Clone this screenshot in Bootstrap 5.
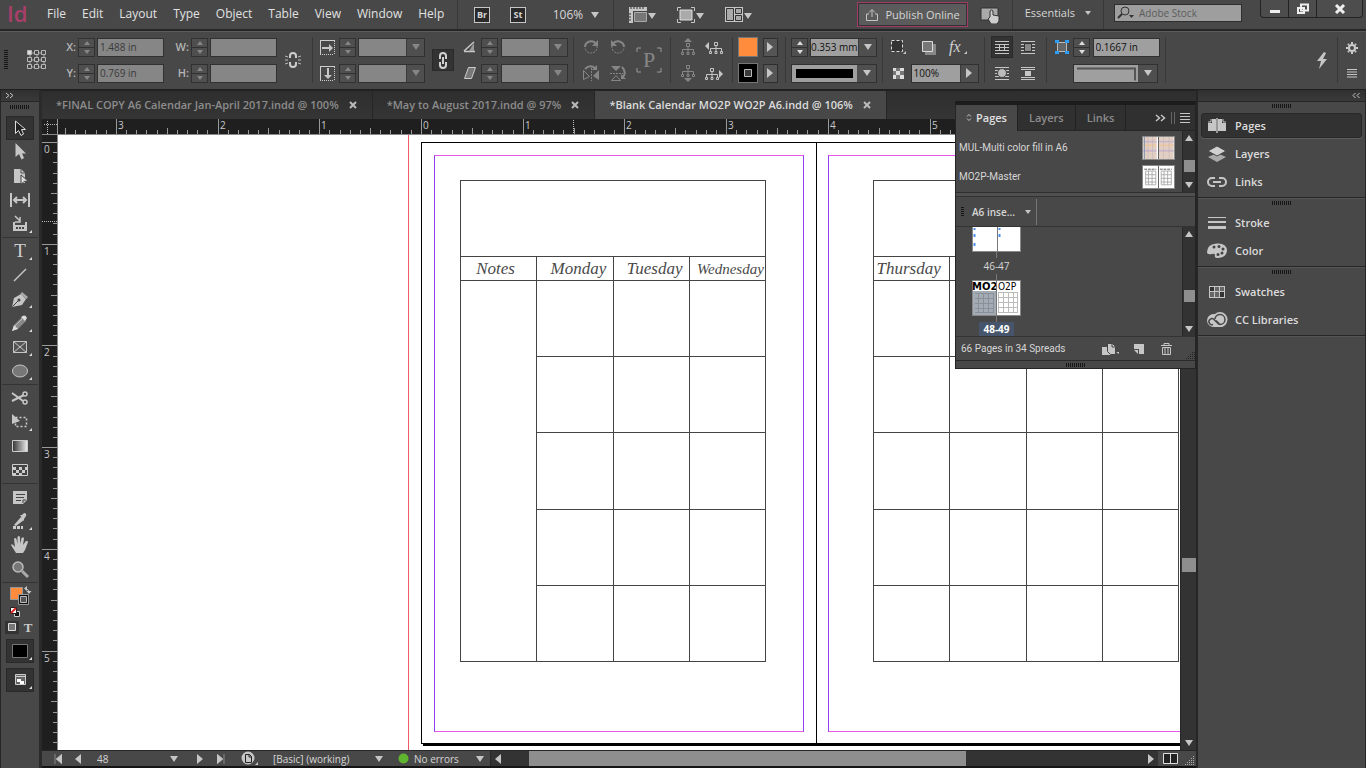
<!DOCTYPE html>
<html lang="en">
<head>
<meta charset="utf-8">
<meta name="viewport" content="width=device-width, initial-scale=1">
<title>Blank Calendar MO2P WO2P A6.indd</title>
<link rel="stylesheet" href="https://cdn.jsdelivr.net/npm/bootstrap@5.3.0/dist/css/bootstrap.min.css">
<style>
:root{--ui:#484848;--edge:#262626;--deep:#303030;--ico:#c6c6c6;--dim:#868686;--hi:#5a5a5a}
body{height:100vh;overflow:hidden;background:var(--ui);color:#d6d6d6;font-family:"Open Sans","Noto Sans",sans-serif;font-size:12px;line-height:16px}
button,input{font:inherit;color:inherit}
button{background:none;border:0;padding:0;display:inline-flex;align-items:center;justify-content:center}
svg{display:block;flex:none}
.ic{fill:var(--ico);stroke:none}
.ln{fill:none;stroke:var(--ico)}
.tri::before{content:"";border:4px solid transparent;display:block}
.t-dn::before{border-top:6px solid var(--ico);border-bottom:0}
.t-up::before{border-bottom:6px solid var(--ico);border-top:0}
.t-rt::before{border-left:6px solid var(--ico);border-right:0;border-top-width:5px;border-bottom-width:5px}
.t-lf::before{border-right:6px solid var(--ico);border-left:0;border-top-width:5px;border-bottom-width:5px}
.vr-line{width:1px;background:#383838;flex:none}

/* application bar */
.appbar{height:29px}
.logo-id{width:39px;padding-left:7px;color:#a83f6b;font-size:22px;line-height:26px;font-weight:600}
.menus{width:418px}
.menus a{color:#e2e2e2;text-decoration:none;padding:0 8px;line-height:28px}
.sq{width:16px;height:16px;border:1px solid #c6c6c6;background:#2a2a2a;font-size:9px;font-weight:700;line-height:13px;color:#d6d6d6}
.sq + .sq{margin-left:20px}
.zoomlvl{margin-left:26px;margin-right:13px;gap:8px;width:48px}
.vw{margin-left:14px;margin-right:4px}
.vw + .vw{margin-left:16px}
.publish{width:111px;height:25px;border:1px solid #a03c66;background:#5b5b5b;box-shadow:inset 0 0 0 1px #333;gap:7px;font-size:11px}
.touch{margin:0 12px 0 12px}
.ess{margin:0 12px 4px 12px;gap:10px;font-size:11px}
.stock{width:128px;height:18px;background:#9e9e9e;border:1px solid #2e2e2e;color:#5a5a5a;margin:0 18px 3px 10px}
.stock input{background:none;border:0;outline:0;width:90px;padding:0;font-size:10px;line-height:16px}
.stock input::placeholder{color:#5c5c5c;opacity:1}
.wins{height:18px;border:1px solid #232323;border-top:0;border-radius:0 0 4px 4px;background:#4d4d4d;margin-right:3px}
.wins button{width:28px;border-right:1px solid #232323}
.wins button:last-child{width:45px;border:0}

/* control bar */
.ctl{height:61px;border-top:2px solid var(--edge);border-bottom:1px solid #221e20;box-shadow:inset 0 1px 0 var(--hi);font-size:11px}
.ctl .vr-line{height:46px}
.refpt{margin:0 8px 0 19px}
.grp{display:grid;column-gap:2px;row-gap:7px;grid-auto-rows:19px;padding:0 5px;align-items:center;justify-items:center}
.g-pos{grid-template-columns:16px 17px 67px 23px 17px 67px 28px}
.g-scale{grid-template-columns:19px 17px 67px 32px 18px 17px 68px}
.g-rot{grid-template-columns:24px 26px 32px}
.g-tree{grid-template-columns:23px 26px}
.g-fill{grid-template-columns:20px 20px}
.g-strk{grid-template-columns:17px 67px}
.g-fx{grid-template-columns:20px 69px}
.g-wrap{grid-template-columns:23px 26px}
.g-off{grid-template-columns:19px 17px 68px}
.g-pos .tall{grid-area:1/7/3/8}
.g-scale .tall{grid-area:1/4/3/5}
.g-rot .tall{grid-area:1/3/3/4}
.lbl{justify-self:end;font-weight:600;color:#b4b4b4;font-size:11px}
.spin{width:17px;height:19px;border:1px solid #313131;display:flex;flex-direction:column}
.spin button{flex:1;background:#4f4f4f}
.spin button:first-child{border-bottom:1px solid #313131}
.spin button::before{content:"";border:3px solid transparent;border-bottom:4px solid var(--dim);border-top:0}
.spin button:last-child::before{border-top:4px solid var(--dim);border-bottom:0}
.spin.on button:first-child::before{border-bottom-color:#ddd}
.spin.on button:last-child::before{border-top-color:#ddd}
.fld{height:19px;border:1px solid #313131;background:#868686;color:#3a3a3a;width:67px;padding:0 2px;outline:0;border-radius:0;font-size:10px;line-height:17px}
.fld.on{background:#9f9f9f;color:#111}
.combo{display:flex;width:67px;height:19px;border:1px solid #313131}
.combo .fld{border:0;height:17px;flex:1;width:10px;min-width:0}
.combo button{width:18px;background:#4f4f4f;border-left:1px solid #3a3a3a}
.combo.off .tri::before{border-top-color:var(--dim)}
.combo span.tri{width:19px;height:17px;background:#4f4f4f;display:flex;align-items:center;justify-content:center}
.g-strk .fld{padding:0}
.g-fx .combo{width:68px}
.press{background:#333;border:1px solid #2a2a2a;width:22px;height:22px}
.mini{width:15px;height:19px;border:1px solid #2e2e2e;background:#555}
.swatch-f{width:20px;height:20px;background:#ff8b3c;border:1px solid #777;padding:0}
.swatch-s{width:20px;height:20px;background:#000;border:1px solid #777;padding:0}
.stroke-style{grid-column:1/3;width:86px;justify-self:end}
.stroke-style .solid{height:17px;background:#000;border:4px solid #9f9f9f}
.wrapto{grid-column:2/4;width:85px;justify-self:start}
.wrapto .bend{height:17px;background:#9f9f9f}
.ctl-end{margin-left:9px}
.end-ic{width:28px;gap:15px}

/* workspace */
#work,.viewrow,.docview,.paste,.docwin{min-height:0;min-width:0}
.docwin{position:relative}
.hdr{height:12px;background:linear-gradient(#303030,#3a3a3a);border-bottom:1px solid var(--edge)}
.tools{width:42px;border-right:3px solid #2a2a2a;border-left:1px solid #262626}
.tgrip{margin:3px 0 7px}
.tools .tool{width:28px;height:24px;margin-left:5px}
.tools .tool.sel{background:#333;box-shadow:inset 0 0 0 1px #292929}
.tools .mode{margin-top:5px}
.tools hr{height:1px;margin:1px 1px;background:#333;border:0;opacity:1}
.swcluster{margin-top:1px;margin-bottom:3px}
.grip-h{width:20px;height:4px;background:repeating-linear-gradient(90deg,#161616 0 1px,transparent 1px 2px)}
.grip-v{width:4px;height:20px;background:repeating-linear-gradient(#161616 0 1px,transparent 1px 2px)}
.tabs{height:29px;background:linear-gradient(#2e2e2e,#353535);border-top:1px solid #232323;font-size:11px;font-weight:600;color:#8c8c8c}
.tabs .doc{height:28px;padding:0 15px 0 14px;border-right:1px solid #262626;gap:10px}
.tabs .doc.cur{background:var(--ui);color:#dcdcdc}
.ruler-h{height:16px;background:#1f1f1f;border-bottom:1px solid #8a8a8a}
.ruler-v{width:16px;background:#1f1f1f;border-right:1px solid #8a8a8a}
.ruler-h svg,.ruler-v svg{overflow:hidden}
.paste{background:#fff;overflow:hidden}
.guide{width:1px;background:#ee5a68;margin-left:350px}
.spread{margin:7px 0 0 12px}
.leaf{width:396px;height:602px;border:1px solid #000;flex:none;padding:12px}
.leaf + .leaf{border-left:0;padding-left:11px}
.under{height:2px;background:#000;width:790px;margin-left:2px}
.margins{height:577px;border:1px solid #e45ae4;border-left-color:#963cf0;border-right-color:#963cf0;padding:24px 25px}
.leaf + .leaf .margins{padding-left:44px}
.cal{width:306px;table-layout:fixed;border-collapse:collapse;color:#4a4a4a;font-family:"Liberation Serif",serif;font-style:italic;font-size:17px;line-height:20px}
.cal td,.cal th{border:1px solid #444;padding:0;font-weight:400;text-align:center;white-space:nowrap}
.cal td{height:76px}
.cal tr:nth-child(5) td{height:77px}
.cal .days{height:24px}
.cal .days th{padding-left:7px}
.cal .days .wide{font-size:15px;padding-left:6px}
.cal .days .first{padding-left:0;padding-right:6px}
.sbar-v{width:16px;background:#333;border-left:1px solid #262626}
.thumb{background:#8e8e8e}
.vs-gap{height:439px;flex-shrink:1}
.vs-thumb{width:14px;height:14px}

/* status bar */
.status{height:18px;border-top:1px solid #262626;border-bottom:2px solid #151515;font-size:10px}
.status .track{background:#333;border-left:1px solid #262626}
.s1{margin-left:12px}.s2{margin-left:13px}
.pg{width:70px;margin-left:16px;border:0;padding:0;background:none;outline:0}
.s3{margin-left:3px}.s4{margin-left:19px}.s5{margin-left:14px}.s6{margin:0 14px 0 16px}
.s7{width:110px;margin-right:15px}.s8{width:70px;margin:0 6px 0 5px}
.s7,.s8{justify-content:space-between}
.hthumb{width:437px;margin-left:24px}

/* docked panels */
.dock{width:170px;border-left:2px solid #262626;border-right:1px solid #262626}
.dockset{border-bottom:1px solid #262626;box-shadow:0 1px 0 #555;padding:2px 3px 1px;margin-bottom:1px}
.dockset button{height:28px;width:100%;justify-content:flex-start;padding-left:4px;gap:6px;font-weight:600;font-size:11px;color:#dcdcdc}
.dockset button svg{width:24px}
.dockset button.sel{height:25px;margin:1px 0 2px;background:#323232;border:1px solid #282828;border-radius:3px;box-shadow:0 1px 0 #5c5c5c;padding-left:3px}
.dgrip{margin-bottom:4px}

/* floating pages panel */
.float{position:absolute;right:0;top:11px;width:241px;background:var(--ui);border:1px solid #242424;border-top:4px solid #1c1c1c;font-size:10px;z-index:3}
.float .plain{font-family:Roboto,"Open Sans",sans-serif}
.ptabs{height:26px;background:#303030;border-bottom:1px solid #262626;font-size:11px;font-weight:600;color:#8c8c8c}
.ptabs button{height:26px;border-right:1px solid #222;padding:0 11px}
.ptabs button.cur{background:var(--ui);color:#e0e0e0;width:62px;padding:0;gap:4px}
.masters{height:61px}
.psb{width:13px;background:#333;border-left:1px solid #282828}
.pth{width:11px;height:12px}
.big{margin-top:53px}
.mrow{height:29px;padding:5px 7px 0 3px}
.th2{width:33px;height:24px;border:1px solid #888;background:#fff}
.th3{width:49px;border:1px solid #888;border-top:0;background:#fff}
.split{height:5px;border-top:1px solid #2e2e2e;border-bottom:1px solid #333;background:#505050}
.inse{height:30px;border-bottom:1px solid #333;font-weight:600}
.inse button{margin-left:8px;font-size:10px;width:59px;justify-content:space-between}
.gsm{margin-left:5px;height:10px;width:3px}
.ibar{width:1px;height:26px;background:#777;margin-left:5px}
.plist{height:109px;overflow:hidden}
.pcol{width:49px;margin-left:16px}
.stem{width:1px;height:6px;background:#777}
.l46{line-height:16px}
.lab-sel{background:#46556b;color:#fff;font-weight:700;padding:0 4px;line-height:14px}
.pfoot{height:24px;border-top:1px solid #333;padding-left:5px}
.pend{height:8px;border-top:1px solid #2a2a2a}
</style>
</head>
<body class="d-flex flex-column">

<svg width="0" height="0" class="position-absolute" aria-hidden="true">
  <defs>
    <path id="corner" d="M26 18v3h-3z" fill="#ddd"/>
    <g id="tree" fill="none" stroke="currentColor"><path d="M5.500 1.500h3v3h-3zM7 5v2M1.500 10V7.500h11V10M7 7.500V10"/><path d="M.5 10.500h2v2h-2zM6 10.500h2v2H6zM11.500 10.500h2v2h-2z"/></g>
    <g id="link" fill="none" stroke="#d0d0d0" stroke-width="2"><path d="M4 7V4a3 3 0 0 1 6 0v3M4 10v3a3 3 0 0 0 6 0v-3M7 5v7"/></g>
    <g id="gridpage" stroke="#aaa" fill="none"><path d="M2.500 5.500h11v15h-11zM5.500 5.500v15M9.500 5.500v15M2.500 9.500h11M2.500 13.500h11M2.500 17.500h11"/><path d="M1 3.500h13" stroke="#555" stroke-dasharray="3 1"/></g>
  </defs>
</svg>

<header class="appbar d-flex align-items-start flex-shrink-0">
  <div class="logo-id">Id</div>
  <nav class="menus d-flex">
    <a href="#">File</a><a href="#">Edit</a><a href="#">Layout</a><a href="#">Type</a><a href="#">Object</a><a href="#">Table</a><a href="#">View</a><a href="#">Window</a><a href="#">Help</a>
  </nav>
  <div class="vr-line h-100"></div>
  <div class="d-flex align-items-center h-100 flex-grow-1">
    <button class="sq ms-3">Br</button>
    <button class="sq">St</button>
    <button class="zoomlvl">106% <span class="tri t-dn"></span></button>
    <div class="vr-line h-100"></div>
    <button class="vw" aria-label="View options"><svg width="28" height="18"><path d="M1 1h18v4H5v12H1z" class="ic"/><path d="M3 1v2M6 1v2M9 1v2M12 1v2M15 1v2M1 8h2M1 11h2M1 14h2" stroke="#333"/><path d="M6.500 6.500h12v9h-12z" fill="#777" stroke="#aaa"/><path d="M20 7h8l-4 6z" class="ic"/></svg></button>
    <button class="vw" aria-label="Screen mode"><svg width="28" height="18"><path d="M4 4h12v10H4z" fill="#aaa" stroke="#ddd"/><path d="M1.500 5V1.500H5M15 1.500h3.500V5M18.500 13v3.500H15M5 16.500H1.500V13" class="ln"/><path d="M20 7h8l-4 6z" class="ic"/></svg></button>
    <button class="vw" aria-label="Arrange documents"><svg width="28" height="18"><path d="M1 1h18v15H1z" class="ic"/><path d="M2.500 2.500h7v12h-7zM11.500 2.500h6v5h-6zM11.500 9.500h6v5h-6z" fill="#aaa" stroke="#333"/><path d="M20 7h8l-4 6z" class="ic"/></svg></button>
    <button class="publish ms-auto"><svg width="14" height="14"><path d="M4 6H1.500v6.500h11V6H10M7 9V2M4 4.500L7 1.500l3 3" class="ln"/></svg>Publish Online</button>
    <button class="touch" aria-label="Touch workspace"><svg width="20" height="18"><path d="M1 2h17v12H1z" fill="#aaa" stroke="#333"/><path d="M10 11V5q1.500-2 3 0v4l6 1v5l-2 3h-6l-3-5 1-1z" fill="#ccc" stroke="#333"/></svg></button>
    <div class="vr-line h-100"></div>
    <button class="ess">Essentials <svg width="6" height="4"><path d="M0 0h6L3 4z" class="ic"/></svg></button>
    <div class="vr-line h-100"></div>
    <label class="stock d-flex align-items-center"><svg width="24" height="16"><circle cx="10" cy="6" r="4" fill="none" stroke="#333"/><path d="M7 9l-4 4" stroke="#333" stroke-width="2"/><path d="M14 10h5l-2.500 3z" fill="#333"/></svg><input type="text" placeholder="Adobe Stock" aria-label="Search Adobe Stock"></label>
    <div class="wins d-flex align-self-start">
      <button aria-label="Minimize"><svg width="12" height="10"><path d="M1 6h10v3H1z" fill="#eee"/></svg></button>
      <button aria-label="Restore"><svg width="14" height="12"><path d="M5 1.500h7v6H5zM2 5h6v5H2z" fill="#4d4d4d" stroke="#eee" stroke-width="2"/></svg></button>
      <button aria-label="Close"><svg width="12" height="10"><path d="M2 1l8 8M10 1L2 9" stroke="#eee" stroke-width="3"/></svg></button>
    </div>
  </div>
</header>

<section class="ctl d-flex align-items-center flex-shrink-0">
  <div class="grip-v ms-1"></div>
  <svg width="20" height="20" class="refpt"><path d="M3 3h14v14H3zM10 3v14M3 10h14" fill="none" stroke="#aaa"/><g fill="#484848" stroke="#b8b8b8"><path d="M.5.5h4v4h-4z" fill="#ddd"/><path d="M7.500.5h4v4h-4zM14.500.5h4v4h-4zM.5 7.500h4v4h-4zM7.500 7.500h4v4h-4zM14.500 7.500h4v4h-4zM.5 14.500h4v4h-4zM7.500 14.500h4v4h-4zM14.500 14.500h4v4h-4z"/></g></svg>
  <div class="grp g-pos">
    <label class="lbl" for="fx">X:</label><span class="spin"><button aria-label="Up"></button><button aria-label="Down"></button></span><input class="fld" id="fx" value="1.488 in">
    <label class="lbl" for="fw">W:</label><span class="spin"><button aria-label="Up"></button><button aria-label="Down"></button></span><input class="fld" id="fw">
    <svg class="tall" width="16" height="18"><path d="M5 7V5a3 3 0 0 1 6 0v2M5 11v2a3 3 0 0 0 6 0v-2" fill="none" stroke="#ccc" stroke-width="2"/><path d="M0 5l3 1M0 9h3M0 13l3-1M16 5l-3 1M16 9h-3M16 13l-3-1" stroke="#bbb"/></svg>
    <label class="lbl" for="fy">Y:</label><span class="spin"><button aria-label="Up"></button><button aria-label="Down"></button></span><input class="fld" id="fy" value="0.769 in">
    <label class="lbl" for="fh">H:</label><span class="spin"><button aria-label="Up"></button><button aria-label="Down"></button></span><input class="fld" id="fh">
  </div>
  <div class="vr-line"></div>
  <div class="grp g-scale">
    <svg width="15" height="15"><path d="M0 .5h15M.5 0v14" stroke="#ccc"/><path d="M14.500 1v14M0 14.500h14" stroke="#ccc" stroke-dasharray="1 1"/><path d="M2 7h7V4l4 4-4 4V9H2z" class="ic"/></svg>
    <span class="spin"><button aria-label="Up"></button><button aria-label="Down"></button></span>
    <span class="combo off"><input class="fld" aria-label="Scale X"><button class="tri t-dn" aria-label="Open"></button></span>
    <button class="press tall" aria-label="Constrain"><svg width="14" height="17"><use href="#link"/></svg></button>
    <svg width="14" height="12"><path d="M1 10.500h11M1 10L11 1" class="ln" stroke-width="1.500"/><path d="M6 10l5-8v8z" fill="#999"/></svg>
    <span class="spin"><button aria-label="Up"></button><button aria-label="Down"></button></span>
    <span class="combo off"><input class="fld" aria-label="Rotation"><button class="tri t-dn" aria-label="Open"></button></span>
    <svg width="15" height="15"><path d="M0 .5h15M.5 0v14" stroke="#ccc"/><path d="M14.500 1v14M0 14.500h14" stroke="#ccc" stroke-dasharray="1 1"/><path d="M7 2v7H4l4 4 4-4H9V2z" class="ic"/></svg>
    <span class="spin"><button aria-label="Up"></button><button aria-label="Down"></button></span>
    <span class="combo off"><input class="fld" aria-label="Scale Y"><button class="tri t-dn" aria-label="Open"></button></span>
    <svg width="14" height="12"><path d="M5.500.5h7l-4 11h-7z" fill="#777" stroke="#ccc"/></svg>
    <span class="spin"><button aria-label="Up"></button><button aria-label="Down"></button></span>
    <span class="combo off"><input class="fld" aria-label="Shear"><button class="tri t-dn" aria-label="Open"></button></span>
  </div>
  <div class="vr-line"></div>
  <div class="grp g-rot">
    <svg width="16" height="16"><path d="M2 8a6 6 0 0 1 11-3" fill="none" stroke="#868686" stroke-width="2"/><path d="M14 7a6 6 0 0 1-12 2" fill="none" stroke="#868686" stroke-dasharray="2 1"/><path d="M15 1v6H9z" fill="#868686"/></svg>
    <svg width="16" height="16"><path d="M14 8A6 6 0 0 0 3 5" fill="none" stroke="#868686" stroke-width="2"/><path d="M2 7a6 6 0 0 0 12 2" fill="none" stroke="#868686" stroke-dasharray="2 1"/><path d="M1 1v6h6z" fill="#868686"/></svg>
    <svg class="tall" width="26" height="26"><path d="M1 5V1h4M21 1h4v4M25 21v4h-4M5 25H1v-4" fill="none" stroke="#999"/><text x="13" y="20" text-anchor="middle" font-family="Liberation Serif" font-size="22" fill="#868686">P</text></svg>
    <svg width="16" height="16"><path d="M8.500 3v13" stroke="#868686" stroke-dasharray="2 1"/><path d="M.5 5.500v9l6-3z" fill="none" stroke="#868686"/><path d="M16 5v10l-6-4z" fill="#868686"/><path d="M2 4q5-5 10-1" fill="none" stroke="#868686" stroke-width="2"/><path d="M14 0v5H9z" fill="#868686"/></svg>
    <svg width="16" height="16"><path d="M0 8.500h13" stroke="#868686" stroke-dasharray="2 1"/><path d="M1 1h10L6 6z" fill="#868686"/><path d="M1.500 15.500h9l-4.500-5z" fill="none" stroke="#868686"/><path d="M12 2q5 5 1 10" fill="none" stroke="#868686" stroke-width="2"/><path d="M11 9v5h5z" fill="#868686"/></svg>
  </div>
  <div class="vr-line"></div>
  <div class="grp g-tree">
    <svg width="14" height="18" color="#868686"><use href="#tree" y="4"/><path d="M3 4h8L7 0z" fill="#868686"/></svg>
    <svg width="18" height="13" color="#c6c6c6"><use href="#tree" x="4"/><path d="M4 1v8L0 5z" class="ic"/></svg>
    <svg width="14" height="18" color="#868686"><use href="#tree"/><path d="M3 14h8l-4 4z" fill="#868686"/></svg>
    <svg width="18" height="13" color="#c6c6c6"><use href="#tree"/><path d="M14 3v8l4-4z" class="ic"/></svg>
  </div>
  <div class="vr-line"></div>
  <div class="grp g-fill">
    <button class="swatch-f" aria-label="Fill"></button><button class="mini tri t-rt" aria-label="Fill menu"></button>
    <button class="swatch-s" aria-label="Stroke"><svg width="10" height="10"><path d="M1.500 1.500h7v7h-7z" fill="#3a3a3a" stroke="#bbb"/></svg></button><button class="mini tri t-rt" aria-label="Stroke menu"></button>
  </div>
  <div class="vr-line"></div>
  <div class="grp g-strk">
    <span class="spin on"><button aria-label="Up"></button><button aria-label="Down"></button></span>
    <span class="combo"><input class="fld on" value="0.353 mm" aria-label="Stroke weight"><button class="tri t-dn" aria-label="Open"></button></span>
    <button class="combo stroke-style" aria-label="Stroke style"><span class="flex-grow-1 solid"></span><span class="tri t-dn px-1"></span></button>
  </div>
  <div class="vr-line"></div>
  <div class="grp g-fx">
    <svg width="18" height="16"><path d="M2.500 1.500h11v11h-11z" fill="#333" stroke="#ddd" stroke-dasharray="3 2"/><path d="M17 12v3h-3z" class="ic"/></svg>
    <div class="d-flex justify-content-evenly w-100 align-items-center">
      <svg width="16" height="15"><path d="M4 4h11v11H4z" fill="#888"/><path d="M1.500 1.500h10v10h-10z" fill="#777" stroke="#ddd"/></svg>
      <svg width="20" height="17"><text x="1" y="13" font-family="Liberation Serif" font-style="italic" font-size="16" fill="#d0d0d0">fx</text><path d="M19 12v3h-3z" class="ic"/></svg>
    </div>
    <svg width="11" height="11"><path d="M0 0h11v11H0z" fill="#777"/><path d="M0 0h3v3H0zM7 0h4v3H7zM3 3h4v4H3zM0 7h3v4H0zM7 7h4v4H7z" fill="#ddd"/></svg>
    <span class="combo"><input class="fld on" value="100%" aria-label="Opacity"><button class="tri t-rt" aria-label="Open"></button></span>
  </div>
  <div class="vr-line"></div>
  <div class="grp g-wrap">
    <button class="press" aria-label="No wrap"><svg width="14" height="13"><path d="M0 .5h14M0 3.500h14M0 6.500h14M0 9.500h14M0 12.500h14" class="ln"/><path d="M4.500 3v7M9.500 3v7" class="ln"/></svg></button>
    <svg width="14" height="13"><path d="M0 .5h14M0 3.500h14M0 6.500h14M0 9.500h14M0 12.500h14" class="ln"/><path d="M3.500 2.500h7v8h-7z" fill="#888" stroke="#333"/></svg>
    <svg width="14" height="13"><path d="M0 .5h14M0 3.500h14M0 6.500h14M0 9.500h14M0 12.500h14" class="ln"/><circle cx="7" cy="6" r="4.500" fill="#bbb" stroke="#444"/></svg>
    <svg width="14" height="13"><path d="M0 .5h14M0 2.500h14M0 10.500h14M0 12.500h14" class="ln"/><path d="M4 4h6v5H4z" class="ic"/></svg>
  </div>
  <div class="vr-line"></div>
  <div class="grp g-off">
    <svg width="14" height="14"><path d="M2.500 2.500h9v9h-9z" fill="#666" stroke="#bbb"/><path d="M0 0h4v3H0zM10 0h4v3h-4zM0 11h4v3H0zM10 11h4v3h-4z" fill="#2f9df4"/></svg>
    <span class="spin on"><button aria-label="Up"></button><button aria-label="Down"></button></span>
    <input class="fld on" value="0.1667 in" aria-label="Offset">
    <button class="combo wrapto" aria-label="Wrap to"><svg class="bend" width="64" height="17"><path d="M3 3.500h58v12" fill="none" stroke="#555" stroke-width="2"/></svg><span class="tri t-dn px-1"></span></button>
  </div>
  <div class="vr-line"></div>
  <button class="ms-auto" aria-label="Quick apply"><svg width="12" height="17"><path d="M8 0L1 9h4l-2 8 8-10H7l3-6z" class="ic"/></svg></button>
  <div class="vr-line ctl-end"></div>
  <div class="d-flex flex-column align-items-center end-ic">
    <svg width="12" height="12"><circle cx="6" cy="6" r="3" fill="none" stroke="#ccc" stroke-width="2"/><path d="M6 0v2M6 10v2M0 6h2M10 6h2M2 2l1 1M9 9l1 1M10 2L9 3M3 9l-1 1" stroke="#ccc" stroke-width="2"/></svg>
    <svg width="10" height="9"><path d="M0 .5h10M0 3h10M0 5.500h10M0 8h10" class="ln"/></svg>
  </div>
</section>

<main class="d-flex flex-grow-1 position-relative" id="work">
  <aside class="tools d-flex flex-column flex-shrink-0">
    <div class="hdr"><svg width="14" height="11"><path d="M5 3l3 2.500L5 8M9 3l3 2.500L9 8" class="ln"/></svg></div>
    <div class="grip-h mx-auto tgrip"></div>
    <button class="tool sel" aria-label="Selection"><svg width="28" height="24"><path d="M9.500 5v12.500l3-3 2.500 5 2.500-1.500-2-4.500h4z" fill="#222" stroke="#ddd"/></svg></button>
    <button class="tool" aria-label="Direct selection"><svg width="28" height="24"><path d="M9.500 3v14l3.500-3 2.500 5.500 2.500-1.500-2-4.500h4z" class="ic"/></svg></button>
    <button class="tool" aria-label="Page"><svg width="28" height="24"><path d="M8 5h7l4 4v10H8z" class="ic"/><path d="M15 5v4h4" fill="none" stroke="#555"/><path d="M15 11l7 6-4 .5-3 3z" fill="#ddd" stroke="#444"/></svg></button>
    <button class="tool" aria-label="Gap"><svg width="28" height="24"><path d="M5 5v14M23 5v14M8 12h12M11 9l-3 3 3 3M17 9l3 3-3 3" class="ln" stroke-width="2"/></svg></button>
    <button class="tool" aria-label="Content collector"><svg width="28" height="24"><path d="M7 10v9h14v-9h-2v3H9v-3z" class="ic"/><path d="M10 15h2v2h-2zM13 15h2v2h-2zM16 15h2v2h-2z" fill="#444"/><path d="M9 4l5 5M14 5v5H9" class="ln" stroke-width="1.500"/><use href="#corner"/></svg></button>
    <hr>
    <button class="tool" aria-label="Type"><svg width="28" height="24"><text x="14" y="18" text-anchor="middle" font-family="Liberation Serif" font-size="19" fill="#d0d0d0">T</text><use href="#corner"/></svg></button>
    <button class="tool" aria-label="Line"><svg width="28" height="24"><path d="M8 18L20 6" class="ln" stroke-width="1.500"/></svg></button>
    <button class="tool" aria-label="Pen"><svg width="28" height="24"><path d="M6 20l2-9 7-4 5 5-4 6z" class="ic"/><path d="M6.500 19.500l6-6" stroke="#444"/><circle cx="13" cy="13" r="1.500" fill="#444"/><path d="M16 5l6 5-1.500 2-6-5z" fill="#aaa"/><use href="#corner"/></svg></button>
    <button class="tool" aria-label="Pencil"><svg width="28" height="24"><path d="M6 20l2-6 8-8 4 4-8 8z" fill="#888"/><path d="M6 20l2-6 4 4zM16 5.500q3-2.500 5 1.500L19 10l-4-4z" fill="#ddd"/><path d="M9 15l7-7" stroke="#bbb"/><use href="#corner"/></svg></button>
    <button class="tool" aria-label="Rectangle frame"><svg width="28" height="24"><path d="M7.500 6.500h13v11h-13zM7.500 6.500l13 11M20.500 6.500l-13 11" fill="#555" stroke="#c6c6c6"/><use href="#corner"/></svg></button>
    <button class="tool" aria-label="Ellipse"><svg width="28" height="24"><ellipse cx="14" cy="12" rx="7.500" ry="6" fill="#777" stroke="#c6c6c6"/><use href="#corner"/></svg></button>
    <hr>
    <button class="tool" aria-label="Scissors"><svg width="28" height="24"><path d="M6 7l11 8M6 15l12-6" class="ln" stroke-width="2"/><circle cx="19" cy="8" r="2" class="ln" stroke-width="1.500"/><circle cx="19" cy="16" r="2" class="ln" stroke-width="1.500"/></svg></button>
    <button class="tool" aria-label="Free transform"><svg width="28" height="24"><path d="M9.500 7.500h11v9h-11z" fill="none" stroke="#ccc" stroke-dasharray="2 2" stroke-width="1.500"/><path d="M6 4v10l8-3z" class="ic"/><use href="#corner"/></svg></button>
    <button class="tool" aria-label="Gradient swatch"><svg width="28" height="24"><defs><linearGradient id="gr"><stop stop-color="#333"/><stop offset="1" stop-color="#eee"/></linearGradient></defs><path d="M6.500 6.500h15v11h-15z" fill="url(#gr)" stroke="#ccc"/></svg></button>
    <button class="tool" aria-label="Gradient feather"><svg width="28" height="24"><path d="M6.500 6.500h15v11h-15z" fill="#444" stroke="#ccc"/><path d="M7 9h3v3H7zM13 9h3v3h-3zM19 9h2v3h-2zM10 12h3v3h-3zM16 12h3v3h-3zM7 15h3v2H7zM13 15h3v2h-3z" fill="#ccc"/></svg></button>
    <hr>
    <button class="tool" aria-label="Note"><svg width="28" height="24"><path d="M7 6h14v9l-4 4H7z" class="ic"/><path d="M10 9.500h9M10 12.500h8M10 15.500h5M17 18v-3h3" fill="none" stroke="#444"/></svg></button>
    <button class="tool" aria-label="Eyedropper"><svg width="28" height="24"><path d="M8 16l7-8 3 3-8 6zM14 6l2 0 2-2q3 0 2 3l-2 3 0 2z" class="ic"/><path d="M7 18.500h10" stroke="#ccc" stroke-width="3" stroke-dasharray="3 1"/><use href="#corner"/></svg></button>
    <button class="tool" aria-label="Hand"><svg width="28" height="24"><path d="M10 20l-5-8q1-2 4 2L8 6q1-2 2.500 0l1 5V4q1.500-2 2.500 0v7l1.500-6q2-1.500 2.500.5L17 12l3-4q2-.5 2 1l-3 8-2 3z" class="ic"/></svg></button>
    <button class="tool" aria-label="Zoom"><svg width="28" height="24"><circle cx="12" cy="10" r="5" fill="#777" stroke="#bbb" stroke-width="1.500"/><path d="M16 14l6 6" stroke="#aaa" stroke-width="3"/></svg></button>
    <hr>
    <svg class="swcluster" width="38" height="51">
      <path d="M9.500 2.500h12v12h-12z" fill="#ff8b3c" stroke="#999"/>
      <path d="M17.500 9.500h10v10h-10z" fill="#111" stroke="#999"/><path d="M19.500 11.500h6v6h-6z" fill="#555" stroke="#bbb"/>
      <path d="M25 4q3 0 3 4" class="ln"/><path d="M26 1v5l-3-2.500zM25.500 6h5L28 9z" class="ic"/>
      <path d="M13.500 26.500h5v5h-5z" fill="#111" stroke="#ccc"/><path d="M9.500 22.500h6v6h-6z" fill="#fff" stroke="#222"/><path d="M10 28l5-5" stroke="#d22" stroke-width="2"/>
      <path d="M4 36h14v13H4z" fill="#333"/><path d="M7.500 38.500h7v7h-7z" fill="#777" stroke="#ddd"/>
      <text x="27" y="47" text-anchor="middle" font-family="Liberation Serif" font-weight="700" font-size="13" fill="#ccc">T</text>
    </svg>
    <button class="tool sel" aria-label="Apply colour"><svg width="28" height="24"><path d="M6.500 5.500h15v13h-15z" fill="#000" stroke="#777"/><use href="#corner"/></svg></button>
    <button class="tool sel mode" aria-label="View mode"><svg width="28" height="24"><path d="M9.500 6.500h10v10h-10z" fill="#666" stroke="#ccc"/><path d="M9 8.500h11" stroke="#ccc"/><path d="M11 11h4v3h-4zM14 13h4v3h-4z" fill="#fff"/><use href="#corner"/></svg></button>
  </aside>

  <section class="d-flex flex-column flex-grow-1 docwin">
    <div class="tabs d-flex align-items-end flex-shrink-0">
      <div class="doc d-flex align-items-center">*FINAL COPY A6 Calendar Jan-April 2017.indd @ 100% <button aria-label="Close"><svg width="8" height="8"><path d="M1 1l6 6M7 1L1 7" stroke="#bbb" stroke-width="2"/></svg></button></div>
      <div class="doc d-flex align-items-center">*May to August 2017.indd @ 97% <button aria-label="Close"><svg width="8" height="8"><path d="M1 1l6 6M7 1L1 7" stroke="#bbb" stroke-width="2"/></svg></button></div>
      <div class="doc cur d-flex align-items-center">*Blank Calendar MO2P WO2P A6.indd @ 106% <button aria-label="Close"><svg width="8" height="8"><path d="M1 1l6 6M7 1L1 7" stroke="#bbb" stroke-width="2"/></svg></button></div>
    </div>
    <div class="d-flex flex-grow-1 viewrow">
      <div class="d-flex flex-column flex-grow-1 docview">
        <div class="ruler-h flex-shrink-0"><svg id="rh" width="100%" height="15"></svg></div>
        <div class="d-flex flex-grow-1 viewrow">
          <div class="ruler-v flex-shrink-0"><svg id="rv" width="15" height="100%"></svg></div>
          <div class="paste d-flex flex-grow-1">
            <div class="guide flex-shrink-0"></div>
            <div class="spread flex-shrink-0">
              <div class="d-flex">
                <div class="leaf"><div class="margins">
                  <table class="cal">
                    <tr><td colspan="4"></td></tr>
                    <tr class="days"><th class="first">Notes</th><th>Monday</th><th>Tuesday</th><th class="wide">Wednesday</th></tr>
                    <tr><td rowspan="5"></td><td></td><td></td><td></td></tr>
                    <tr><td></td><td></td><td></td></tr><tr><td></td><td></td><td></td></tr><tr><td></td><td></td><td></td></tr><tr><td></td><td></td><td></td></tr>
                  </table>
                </div></div>
                <div class="leaf"><div class="margins">
                  <table class="cal">
                    <tr><td colspan="4"></td></tr>
                    <tr class="days"><th class="first">Thursday</th><th></th><th></th><th></th></tr>
                    <tr><td></td><td></td><td></td><td></td></tr><tr><td></td><td></td><td></td><td></td></tr><tr><td></td><td></td><td></td><td></td></tr><tr><td></td><td></td><td></td><td></td></tr><tr><td></td><td></td><td></td><td></td></tr>
                  </table>
                </div></div>
              </div>
              <div class="under"></div>
            </div>
          </div>
        </div>
      </div>
      <div class="sbar-v d-flex flex-column align-items-center flex-shrink-0">
        <div class="vs-gap"></div><div class="thumb vs-thumb"></div><button class="tri t-dn mt-auto mb-1" aria-label="Scroll down"></button>
      </div>
    </div>
    <footer class="status d-flex align-items-center flex-shrink-0">
      <button class="s1" aria-label="First"><svg width="8" height="10"><path d="M1 0v10M8 0v10L2 5z" fill="#c6c6c6" stroke="#c6c6c6" stroke-width=".5"/></svg></button>
      <button class="s2 tri t-lf" aria-label="Previous"></button>
      <input class="pg" value="48" aria-label="Page">
      <button class="tri t-dn s3" aria-label="Pages"></button>
      <button class="tri t-rt s4" aria-label="Next"></button>
      <button class="s5" aria-label="Last"><svg width="8" height="10"><path d="M7 0v10M0 0v10l6-5z" fill="#c6c6c6" stroke="#c6c6c6" stroke-width=".5"/></svg></button>
      <button class="s6" aria-label="Open"><svg width="18" height="15"><circle cx="7" cy="7" r="6.500" fill="#c6c6c6"/><path d="M4.500 3.500h4l2 2v6h-6z" fill="#c6c6c6" stroke="#222"/><path d="M8 3v3h3" fill="none" stroke="#222"/><path d="M17 11v3h-3z" class="ic"/></svg></button>
      <button class="s7"><span>[Basic] (working)</span><span class="tri t-dn"></span></button>
      <svg width="11" height="11"><circle cx="5.500" cy="5.500" r="5" fill="#5fb52f"/></svg>
      <button class="s8"><span>No errors</span><span class="tri t-dn"></span></button>
      <div class="track d-flex align-items-center flex-grow-1 h-100">
        <button class="tri t-lf mx-1" aria-label="Scroll left"></button><div class="thumb hthumb h-100"></div><button class="tri t-rt ms-auto me-1" aria-label="Scroll right"></button>
      </div>
      <svg width="38" height="15"><path d="M5.500 2.500h14v10h-14zM12.500 2.500v10" fill="#222" stroke="#ddd"/><path d="M27 13.500h9M29 11.500h7M31 9.500h5M33 7.500h3M35 5.500h1" stroke="#aaa" stroke-dasharray="1 1"/></svg>
    </footer>

    <section class="float">
      <div class="ptabs d-flex align-items-center">
        <button class="cur"><svg width="6" height="9"><path d="M1 3.500l2-2 2 2M1 5.500l2 2 2-2" class="ln"/></svg>Pages</button><button>Layers</button><button>Links</button>
        <svg class="ms-auto" width="42" height="14"><path d="M3 4l3.500 3L3 10M8 4l3.500 3L8 10" class="ln" stroke-width="1.500"/><path d="M18.500 1v12M21.500 1v12" stroke="#666"/><path d="M27 2.500h10M27 5.500h10M27 8.500h10M27 11.500h10" class="ln"/></svg>
      </div>
      <div class="d-flex masters plain">
        <div class="flex-grow-1">
          <div class="mrow d-flex align-items-center justify-content-between">MUL-Multi color fill in A6<svg class="th2" viewBox="0 0 33 24"><path d="M0 0h33v24H0z" fill="#e2cfc4"/><path d="M0 5h33M0 15h33" stroke="#cbb8c8" stroke-width="2"/><path d="M0 9h33" stroke="#ecc9a4" stroke-width="2"/><path d="M5 0v24M10 0v24M22 0v24M28 0v24" stroke="#b9a6a8" opacity=".4"/><path d="M1 0v24" stroke="#6d85a5"/><path d="M15.500 0v24" stroke="#fff" stroke-width="2"/><path d="M16.500 0v24" stroke="#555"/></svg></div>
          <div class="mrow d-flex align-items-center justify-content-between">MO2P-Master<svg class="th2" viewBox="0 0 33 24"><use href="#gridpage"/><use href="#gridpage" x="17"/><path d="M16.500 0v24" stroke="#555"/></svg></div>
        </div>
        <div class="psb d-flex flex-column align-items-center justify-content-between py-1"><span class="tri t-up"></span><div class="thumb pth mt-2"></div><span class="tri t-dn"></span></div>
      </div>
      <div class="split"></div>
      <div class="inse d-flex align-items-center"><div class="grip-v gsm"></div><button>A6 inse...<svg width="6" height="4"><path d="M0 0h6L3 4z" class="ic"/></svg></button><div class="ibar"></div></div>
      <div class="d-flex plist">
        <div class="flex-grow-1"><div class="pcol d-flex flex-column align-items-center">
          <svg class="th3" height="25"><path d="M24.500 0v25" stroke="#777"/><path d="M1.500 1v2M1.500 7v3M1.500 16v3M26.500 1v2M26.500 7v3" stroke="#4a8ff0" stroke-width="2"/></svg>
          <div class="stem"></div>
          <div class="l46">46-47</div>
          <div class="stem"></div>
          <svg width="49" height="36"><path d="M.5.5h48v35H.5z" fill="#fff" stroke="#888"/><path d="M1 11h23v24H1z" fill="#a3abb5"/><path d="M6.500 13v19M11.500 13v19M16.500 13v19M21.500 13v19M3 13.500h19M3 18.500h19M3 23.500h19M3 28.500h19M3 32.500h19" stroke="#8a9098"/><path d="M26.500 12v20M31.500 12v20M36.500 12v20M41.500 12v20M45.500 12v20M26 12.500h20M26 17.500h20M26 22.500h20M26 27.500h20M26 32.500h20" stroke="#bbb"/><text x="0" y="10" font-family="DejaVu Sans" font-weight="700" font-size="10" fill="#000">MO2</text><text x="26" y="10" font-family="DejaVu Sans Condensed" font-size="10" fill="#000">O2P</text><path d="M24.500 0v36" stroke="#777"/></svg>
          <div class="stem"></div>
          <div class="lab-sel">48-49</div>
        </div></div>
        <div class="psb d-flex flex-column align-items-center py-1"><span class="tri t-up"></span><div class="thumb pth big"></div><span class="tri t-dn mt-auto"></span></div>
      </div>
      <div class="pfoot d-flex align-items-center plain">66 Pages in 34 Spreads
        <svg class="ms-auto" width="94" height="20"><path d="M1 8h9v8H1z" class="ic"/><path d="M6.500 4.500h5l3 3v8h-5l-3-3z" fill="#c6c6c6" stroke="#444"/><path d="M11 5v3h3" fill="none" stroke="#444"/><path d="M18 15v-2h-3z" class="ic"/><path d="M33 5h10v10h-5v-5h-5z" class="ic"/><path d="M37 15l-4-4h4z" class="ic"/><path d="M60 6.500h11M63 6V4.500h5V6" class="ln"/><path d="M61.500 8.500h8v7h-8zM64 8v8M67 8v8" class="ln"/><path d="M85 19.500h9M87 17.500h7M89 15.500h5M91 13.500h3" stroke="#222" stroke-dasharray="1 1"/></svg>
      </div>
      <div class="pend d-flex align-items-center justify-content-center"><div class="grip-h"></div></div>
    </section>
  </section>

  <aside class="dock flex-shrink-0">
    <div class="hdr d-flex justify-content-end"><svg width="14" height="11"><path d="M4.500 3L2 5.500 4.500 8M8.500 3L6 5.500 8.500 8" class="ln"/></svg></div>
    <div class="dockset"><div class="grip-h mx-auto dgrip"></div>
      <button class="sel"><svg width="20" height="18" viewBox="0 0 20 18"><path d="M1 2h8v12H1zM11 2h8v12h-8z" class="ic"/><path d="M1 2h4v4H1zM15 2h4v4h-4z" fill="#323232"/><path d="M4 2v3H1M16 2v3h3" class="ln"/><path d="M10 1v15" stroke="#fff"/></svg>Pages</button>
      <button><svg width="20" height="18" viewBox="0 0 20 18"><path d="M10 8l9 4-9 5-9-5z" fill="#aaa"/><path d="M10 1l9 5-9 5-9-5z" fill="#d0d0d0" stroke="#484848"/></svg>Layers</button>
      <button><svg width="20" height="18" viewBox="0 0 20 18"><path d="M8 5H5a4 4 0 0 0 0 8h3M12 5h3a4 4 0 0 1 0 8h-3M6 9h8" fill="none" stroke="#c6c6c6" stroke-width="2"/></svg>Links</button></div>
    <div class="dockset"><div class="grip-h mx-auto dgrip"></div>
      <button><svg width="20" height="18" viewBox="0 0 20 18"><path d="M1 3.500h18" class="ln"/><path d="M1 8h18" class="ln" stroke-width="2"/><path d="M1 13.500h18" class="ln" stroke-width="3"/></svg>Stroke</button>
      <button><svg width="20" height="18" viewBox="0 0 20 18"><path d="M0 10Q0 2 10 1.500T20 9q-1 7-10 7-3 0-2-3 0-2-3-1-5 1-5-2z" class="ic"/><g fill="#444"><circle cx="7" cy="5" r="1.500"/><circle cx="12" cy="4.500" r="1.500"/><circle cx="16" cy="7" r="1.500"/><circle cx="15" cy="11" r="1.500"/><circle cx="11" cy="12.500" r="1.500"/></g></svg>Color</button></div>
    <div class="dockset"><div class="grip-h mx-auto dgrip"></div>
      <button><svg width="20" height="18" viewBox="0 0 20 18"><path d="M2 3h16v12H2z" class="ic"/><path d="M3 4h4v4H3zM13 9h4v5h-4z" fill="#333"/><path d="M8 4h4v4H8zM13 4h4v4h-4zM3 9h4v5H3zM8 9h4v5H8z" fill="#666"/></svg>Swatches</button>
      <button><svg width="24" height="18" viewBox="0 0 24 18"><rect x="2" y="3" width="20" height="13" rx="6.500" fill="#c6c6c6"/><circle cx="15" cy="8.500" r="7.500" fill="#c6c6c6"/><path d="M14 13.500l-5-5a3 3 0 1 0-1 5M10 8a5 5 0 1 1 5 5.500l-4-4" fill="none" stroke="#484848" stroke-width="1.500"/></svg>CC Libraries</button></div>
  </aside>
</main>

<script src="https://cdn.jsdelivr.net/npm/bootstrap@5.3.0/dist/js/bootstrap.bundle.min.js"></script>
<script>
// Rulers: one inch at 106% is a little under 102 screen pixels.
(function () {
  var inch = 101.7, ns = 'http://www.w3.org/2000/svg';
  function add(svg, tag, attrs, text) {
    var e = document.createElementNS(ns, tag);
    for (var k in attrs) e.setAttribute(k, attrs[k]);
    if (text !== undefined) e.textContent = text;
    svg.appendChild(e);
  }
  function build(id, zero, vertical, start) {
    var svg = document.getElementById(id), d = '';
    var box = svg.getBoundingClientRect(), length = vertical ? box.height : box.width;
    // the floating panel lies over the right end of the horizontal ruler
    var labelEnd = vertical ? length : document.querySelector('.float').getBoundingClientRect().left - box.left;
    svg.replaceChildren();
    for (var n = -60; n < 300; n++) {
      var p = Math.round(zero + n * inch / 10), whole = n % 10 === 0;
      if (p < start || p > length) continue;
      var len = whole ? 15 : n % 5 === 0 ? 6 : 4;
      d += vertical ? 'M' + (15 - len) + ' ' + (p + .5) + 'H15' : 'M' + (p + .5) + ' ' + (15 - len) + 'V15';
      if (whole && p + 14 < labelEnd) {
        add(svg, 'text', {x: vertical ? 2 : p + 2, y: vertical ? p + 11 : 10, 'font-size': 10, fill: '#c8c8c8'}, Math.abs(n / 10));
      }
    }
    add(svg, 'path', {d: d, stroke: '#999', fill: 'none'});
  }
  function draw() {
    var rh = document.getElementById('rh'), rv = document.getElementById('rv');
    build('rh', 379, false, 16);
    build('rv', 7, true, 0);
    add(rh, 'path', {d: 'M2 5.500h13M5.500 2v13M531.500 1v14', stroke: '#bbb', 'stroke-dasharray': '1 1'});
    add(rh, 'path', {d: 'M15.500 0v15', stroke: '#999'});
    add(rv, 'path', {d: 'M0 86.500h15', stroke: '#bbb', 'stroke-dasharray': '1 1'});
  }
  draw();
  window.addEventListener('resize', draw);
})();
</script>
</body>
</html>
